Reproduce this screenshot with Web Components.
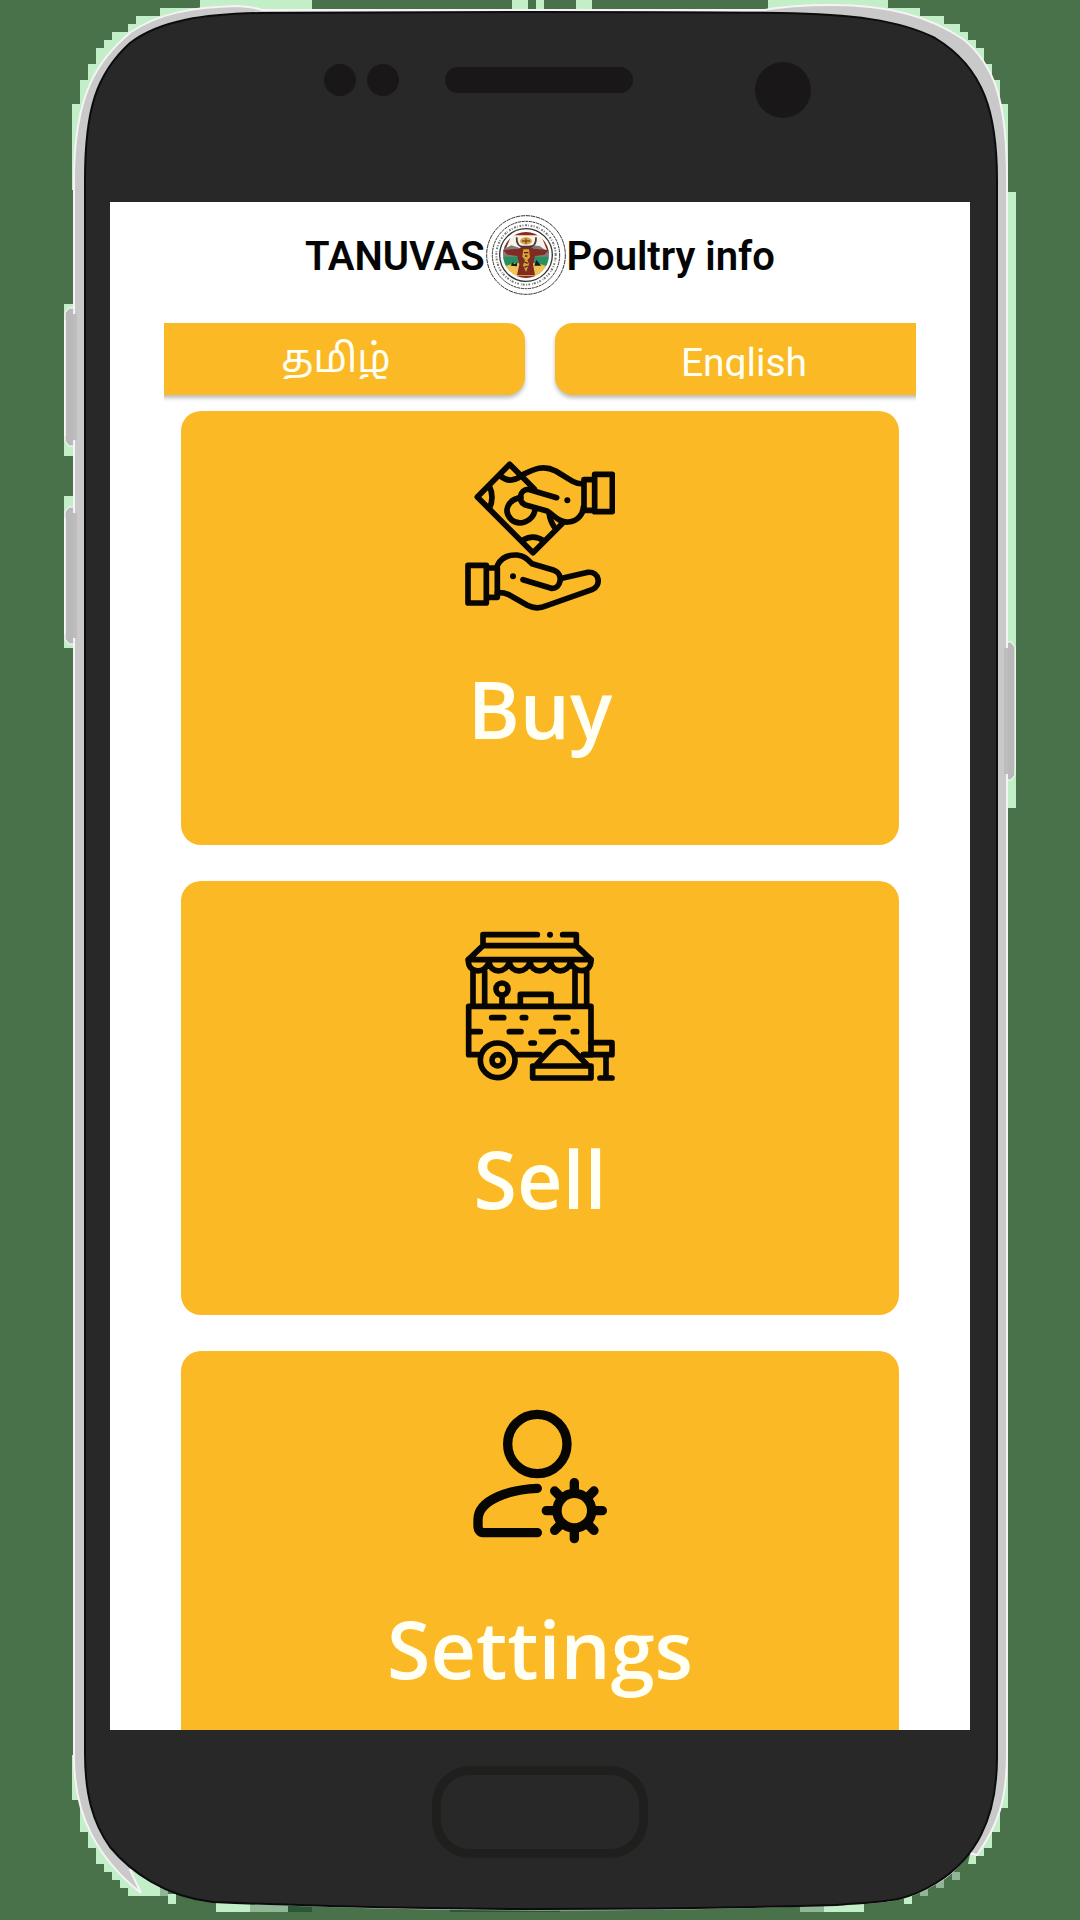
<!DOCTYPE html>
<html lang="en">
<head>
<meta charset="utf-8">
<meta name="viewport" content="width=device-width, initial-scale=1">
<title>TANUVAS Poultry info</title>
<style>
  body { margin: 0; background: #49724b; font-family: Roboto, "Noto Sans", sans-serif; }
</style>
</head>
<body>
<phone-frame>
  <app-header></app-header>
  <language-bar>
    <language-button lang="ta">தமிழ்</language-button>
    <language-button lang="en">English</language-button>
  </language-bar>
  <menu-list>
    <menu-card>
      <buy-icon slot="icon"></buy-icon>
      Buy
    </menu-card>
    <menu-card>
      <sell-icon slot="icon"></sell-icon>
      Sell
    </menu-card>
    <menu-card>
      <settings-icon slot="icon"></settings-icon>
      Settings
    </menu-card>
  </menu-list>
</phone-frame>

<script>
const define = (name, html) => {
  const template = document.createElement('template');
  template.innerHTML = html;
  customElements.define(name, class extends HTMLElement {
    constructor() {
      super();
      this.attachShadow({ mode: 'open' }).append(template.content.cloneNode(true));
    }
  });
};

define('phone-frame', `
<style>
  :host { display: flex; flex-direction: column; height: 100vh; box-sizing: border-box; position: relative; padding: 202px 110px 0; }
  .shell { position: absolute; inset: 0; width: 100%; height: 100%; z-index: -1; }
  main { flex: 1; min-height: 0; overflow: hidden; background: #fff; }
  footer { display: flex; justify-content: center; align-items: flex-start; height: 190px; padding-top: 36px; box-sizing: border-box; }
  .home { width: 216px; height: 92px; box-sizing: border-box; padding: 0; border: 9px solid #1f1f1e; border-radius: 38px; background: #282828; }
</style>
<svg class="shell" viewBox="0 0 1080 1920" preserveAspectRatio="none" aria-hidden="true">
  <!-- blocky halo -->
  <g fill="#c2efc8">
    <path d="M72 190V104H80V80H88V64H96V48H104V40H112V32H128V24H136V16H160V8H200V0H312V20H160L80 190Z"/>
    <path d="M512 0H528V10H512ZM536 0H544V10H536ZM576 0H592V10H576Z"/>
    <path d="M768 12V0H888V8H920V16H944V24H960V32H968V40H976V48H984V64H992V80H1000V104H1008V192H1016V808H1006V190L900 20Z"/>
    <path d="M64 304H76V456H64ZM64 496H76V648H64Z"/>
    <path d="M72 1755V1800H80V1832H88V1848H96V1864H104V1872H112V1880H120V1888H128V1896H160V1880L90 1755Z"/>
    <path d="M168 1894H176V1904H168ZM216 1900H250V1912H216Z"/>
    <path d="M1008 1755V1808H1000V1832H992V1848H984V1856H976V1864H968L990 1755Z"/>
    <path d="M904 1892H912V1904H904ZM824 1902H864V1912H824Z"/>
  </g>
  <g fill="#8fb795"><path d="M160 1888H168V1896H160ZM250 1904H288V1912H250ZM952 1872H960V1880H952ZM936 1880H944V1888H936ZM920 1888H928V1896H920ZM800 1904H824V1912H800Z"/></g>
  <path d="M288 1904H312V1912H288ZM450 1904H560V1912H450Z" fill="#2c5636"/>
  <!-- side keys -->
  <g fill="#b9b9b9" stroke="#fff" stroke-width="1">
    <path d="M76 308H69L65 313V441L69 446H76ZM76 507H69L65 512V639L69 644H76ZM1006 642H1011L1015 647V775L1011 780H1006Z"/>
  </g>
  <!-- metal rim -->
  <path d="M74 180C74 95 97 60 131 32C158 14 190 7 238 6Q254 7 262 10H765Q790 5 833 5C890 5 930 17 963 39C994 64 1007 100 1007 180V1753C1007 1800 998 1825 977 1855L960 1850L130 1870L141 1893C97 1858 74 1815 74 1757Z" fill="#c9c9c9" stroke="#f6f2f6" stroke-width="2"/>
  <path d="M65 320V436M65 518V634" stroke="#fff"/>
  <path d="M75 314V440M75 513V638M1006 648V774" stroke="#bdbdbd" stroke-width="4"/>
  <!-- face -->
  <path d="M213 1902Q380 1910 540 1910Q700 1910 836 1905C890 1902 905 1902 936 1884C950 1877 962 1864 969 1853" fill="none" stroke="#dcd8dc"/>
  <path d="M85 180C85 110 96 74 130 43C160 20 205 14 260 13Q400 12 540 12Q700 12 780 13C850 14 900 20 935 38C985 68 997 115 997 180V1757C997 1820 975 1859 936 1883C905 1902 890 1901 836 1905Q700 1909 540 1909Q380 1909 213 1902C165 1897 130 1871 110 1847C93 1823 85 1795 85 1753Z" fill="#282828" stroke="#0c0c0c" stroke-width="2"/>
  <g fill="#1a1718">
    <circle cx="340" cy="80" r="16"/><circle cx="383" cy="80" r="16"/>
    <rect x="445" y="67" width="188" height="26" rx="13"/>
    <circle cx="783" cy="90" r="28"/>
  </g>
</svg>
<main><slot></slot></main>
<footer><button class="home" aria-label="Home"></button></footer>
`);

define('tanuvas-emblem', `
<style>:host { display: block; width: 80px; height: 80px; } svg { display: block; width: 100%; height: 100%; }</style>
<svg viewBox="589 45 240 240" role="img" aria-label="Emblem">
  <defs><clipPath id="c"><circle cx="709" cy="165" r="69"/></clipPath></defs>
  <g fill="none" stroke="#333">
    <circle cx="709" cy="165" r="118" stroke-width="3" stroke-dasharray="13 2"/>
    <circle cx="709" cy="165" r="101" stroke-width="3" stroke-dasharray="9 2"/>
    <circle cx="709" cy="165" r="79" stroke-width="4"/>
    <circle cx="709" cy="165" r="89" stroke="#777" stroke-width="6" stroke-dasharray="3 5 6 3 2 6 5 4"/>
  </g>
  <g clip-path="url(#c)">
    <rect x="635" y="90" width="150" height="150" fill="#f7f3ea"/>
    <path d="M635 96H670L640 165V240H635ZM783 96H750L778 165V240H783Z" fill="#7c2c20"/>
    <path d="M670 90H750V106H670ZM660 228H760V240H660Z" fill="#8c2a1e"/>
    <path d="M640 148L665 136L690 144L725 136L750 138L778 158V172H640Z" fill="#817b80"/>
    <path d="M640 170H778V202H640Z" fill="#279060"/>
    <path d="M642 200L672 190H745L776 200L750 228H668Z" fill="#efc456"/>
    <ellipse cx="709" cy="123" rx="18" ry="11" fill="#d8a545"/><path d="M697 123H721M709 115V131" stroke="#8a4a20" stroke-width="4"/>
    <path d="M640 150L688 146L698 139H722L731 146L778 150L764 164L736 168L730 192L736 226H682L689 192L683 168L654 164Z" fill="#822b22"/>
    <path d="M701 148H718L721 172L713 180L718 192L709 216L700 196L706 180L698 170Z" fill="#d9a33a"/>
    <path d="M703 158H716M706 168H713M704 186L714 190M704 202L714 198" stroke="#4a2010" stroke-width="4"/>
    <path d="M663 197L670 186L673 193L682 188V199ZM734 197L740 180L747 188L755 197Z" fill="#191919"/>
  </g>
  <path d="M681 112C680 134 690 140 700 140H720C730 140 740 134 739 112" fill="none" stroke="#463a38" stroke-width="5"/>
</svg>
`);

define('app-header', `
<style>
  :host { display: block; }
  h1 { display: flex; justify-content: center; align-items: center; gap: 1px; margin: 0; padding: 13px 0 28px; font: 600 40px/48px Roboto, sans-serif; color: #050505; }
  span { padding-top: 4px; }
</style>
<h1><span>TANUVAS</span><tanuvas-emblem></tanuvas-emblem><span>Poultry info</span></h1>
`);

define('language-bar', `
<style>
  :host { display: block; margin: 0 54px; padding-bottom: 16px; overflow: hidden; }
  nav { display: flex; gap: 30px; margin: 0 -17px; }
</style>
<nav aria-label="Language"><slot></slot></nav>
`);

define('language-button', `
<style>
  :host { flex: 1; display: block; }
  button { display: flex; justify-content: center; align-items: flex-start; width: 100%; height: 72px; padding: 16px 0; box-sizing: border-box; border: 0; border-radius: 18px; background: #fbb926; color: #fffff4; font: 400 39px/48px Roboto, "Noto Sans Tamil", "Noto Sans", sans-serif; box-shadow: 0 3px 4px #0004; }
  span { display: block; height: 40px; overflow: hidden; }
  :host(:lang(ta)) span { line-height: 40px; }
</style>
<button><span><slot></slot></span></button>
`);

define('menu-list', `
<style>:host { display: flex; flex-direction: column; gap: 36px; padding: 0 71px; }</style>
<slot></slot>
`);

define('menu-card', `
<style>
  :host { display: block; }
  button { display: flex; flex-direction: column; align-items: center; gap: 44px; width: 100%; height: 434px; padding: 50px 0 0; box-sizing: border-box; border: 0; border-radius: 20px; background: #fbb926; color: #fffff4; font: 600 79px/108px "Open Sans", sans-serif; }
</style>
<button><slot name="icon"></slot><span><slot></slot></span></button>
`);

const iconStyle = `<style>
  :host { display: block; width: 150px; height: 150px; }
  svg { display: block; width: 100%; height: 100%; fill: none; stroke: #080602; stroke-width: 17; stroke-linecap: round; stroke-linejoin: round; }
  .bold { stroke-width: 28; }
  .dot { fill: #080602; stroke: none; }
</style>`;

define('buy-icon', iconStyle + `
<svg viewBox="75 63 450 450" aria-hidden="true">
  <path d="M283 147L209 73L112 171L279 338L369 248"/>
  <path d="M181 108Q211 132 242 109M148 138Q164 172 148 206M246 302Q280 280 312 303M328 224Q330 240 342 260"/>
  <path d="M243 173C205 178 188 212 213 238C238 260 277 245 285 211"/>
  <path d="M242 107C285 86 310 74 347 93L398 124Q410 131 429 132"/>
  <path d="M350 173L264 148C240 148 232 184 254 194L321 213C345 228 358 248 385 246C414 244 429 222 430 202"/>
  <path d="M464 119H432V211H464M464 103H517V215H464Z"/>
  <path d="M84 376H139V489H84ZM139 384H172V472H139"/>
  <path d="M172 377C183 352 205 344 231 345C255 348 262 358 276 371L342 391C372 402 363 448 334 445L249 419"/>
  <path d="M366 415L444 397C479 394 485 437 456 449L320 497C295 508 279 505 262 496L204 463Q191 457 172 458"/>
  <circle class="dot" cx="219" cy="409" r="9"/><circle class="dot" cx="382" cy="181" r="9"/>
</svg>`);

define('sell-icon', iconStyle + `
<svg viewBox="75 62 450 450" aria-hidden="true">
  <path d="M292 73H129V104M368 73H409V104M129 106H409L453 148H85L129 106"/>
  <circle class="dot" cx="330" cy="73" r="9"/>
  <path d="M85 148C83 191 137 192 147 154C151 191 198 191 208 154C213 191 260 191 270 154C275 191 322 191 332 154C337 191 384 191 392 154C402 191 455 191 453 148"/>
  <path d="M99 184V282M134 184V282M405 184V282M440 184V282"/>
  <circle cx="186" cy="236" r="18"/><path d="M186 257V284M241 282V252H333V282"/>
  <path d="M115 433H86V288H453V433H430M232 433H300"/>
  <path d="M155 322H191M247 322H257M348 322H384M88 364H121M208 364H243M304 364H340M400 364H410M273 398H283"/>
  <circle cx="173" cy="450" r="52"/><circle cx="173" cy="450" r="17"/>
  <path d="M278 467H453V503H278ZM290 462L344 404Q364 386 384 404L440 462"/>
  <path d="M453 397H516V433H430M498 435V503M480 503H516"/>
</svg>`);

define('settings-icon', iconStyle + `
<svg viewBox="75 33 450 450" aria-hidden="true">
  <g class="bold">
    <circle cx="292" cy="162" r="89"/>
    <path d="M292 295C215 298 114 327 114 389V407Q114 428 134 428H292"/>
    <circle cx="403" cy="362" r="52"/>
    <path d="M403 278V305M403 419V446M319 362H346M460 362H487M344 303L362 321M444 403L462 421M462 303L444 321M362 403L344 421"/>
  </g>
</svg>`);
</script>
</body>
</html>
